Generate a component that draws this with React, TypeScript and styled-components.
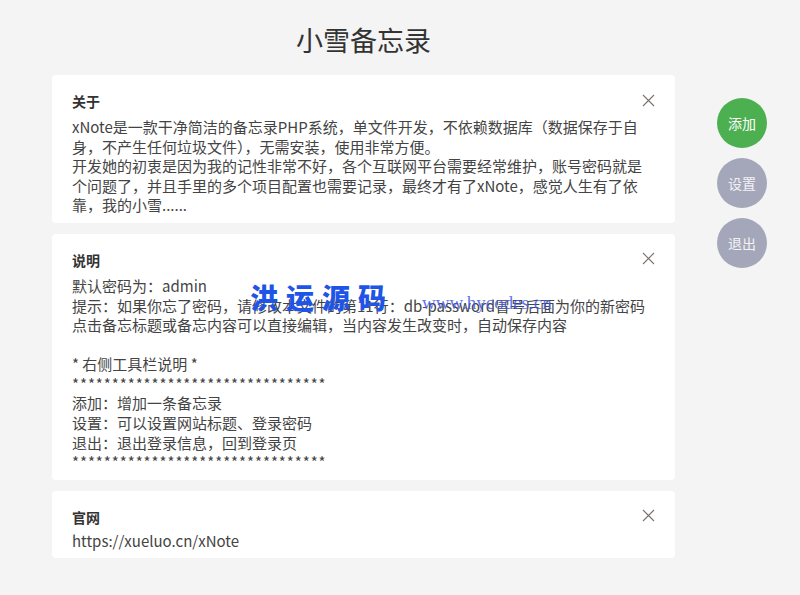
import React from "react";
import styled, { createGlobalStyle } from "styled-components";

const Global = createGlobalStyle`
  html, body { margin: 0; padding: 0; background: #f4f4f4; }
  body { font-family: "Noto Sans CJK SC", "Noto Sans", sans-serif; color: #333; }
  * { box-sizing: border-box; }
`;

const Page = styled.div`
  display: flex;
  align-items: flex-start;
  gap: 42px;
  padding-left: 52px;
  position: relative;
  min-height: 595px;
`;

const Main = styled.div`
  width: 623px;
  display: flex;
  flex-direction: column;
  gap: 11px;
`;

const Title = styled.h1`
  margin: 20px 0 4px;
  font-size: 27px;
  line-height: 40px;
  font-weight: 400;
  text-align: center;
  color: #333;
`;

const Card = styled.div`
  position: relative;
  background: #fff;
  border-radius: 4px;
  padding: 16px 20px 8px;
`;

const CardTitle = styled.div<{ $tight?: boolean }>`
  font-size: 14px;
  font-weight: 700;
  line-height: 20px;
  margin-bottom: ${(p) => (p.$tight ? "4px" : "6px")};
  color: #333;
`;

const CardBody = styled.div<{ $narrow?: boolean }>`
  font-size: 15px;
  line-height: 19.6px;
  color: #444;
  max-width: ${(p) => (p.$narrow ? "572px" : "none")};
`;

const Line = styled.div<{ $stars?: boolean }>`
  min-height: 19.5px;
  letter-spacing: ${(p) => (p.$stars ? "0.95px" : "normal")};
`;

const Close = styled.button`
  position: absolute;
  top: 18px;
  right: 20px;
  width: 14px;
  height: 14px;
  padding: 0;
  border: none;
  background: none;
  display: flex;
  align-items: center;
  justify-content: center;
  cursor: pointer;
`;

const Side = styled.div`
  padding-top: 98px;
  display: flex;
  flex-direction: column;
  gap: 10px;
`;

const Round = styled.button<{ $green?: boolean }>`
  width: 50px;
  height: 50px;
  border-radius: 50%;
  border: none;
  padding: 0;
  font-family: "Noto Sans CJK SC", sans-serif;
  font-size: 14px;
  color: ${(p) => (p.$green ? "#fff" : "#f2f2f6")};
  background: ${(p) => (p.$green ? "#4caf50" : "#a4a7b9")};
  cursor: pointer;
`;

const Watermark = styled.div`
  position: absolute;
  left: 250px;
  top: 277px;
  display: flex;
  align-items: baseline;
  gap: 28px;
  pointer-events: none;
`;

const WmCn = styled.span`
  display: inline-block;
  font-family: "Noto Sans CJK SC", sans-serif;
  font-weight: 900;
  font-size: 28px;
  letter-spacing: 8px;
  color: #1f55e6;
`;

const WmEn = styled.span`
  font-family: "Liberation Serif", serif;
  font-size: 19px;
  color: rgba(70, 90, 230, 0.85);
`;

const X = () => (
  <svg width="13" height="13" viewBox="0 0 13 13">
    <path d="M1 1L12 12M12 1L1 12" stroke="#7a726a" strokeWidth="1.1" fill="none" />
  </svg>
);

const stars = "*".repeat(32);

const notes = [
  {
    title: "关于",
    narrow: true,
    lines: [
      "xNote是一款干净简洁的备忘录PHP系统，单文件开发，不依赖数据库（数据保存于自身，不产生任何垃圾文件），无需安装，使用非常方便。",
      "开发她的初衷是因为我的记性非常不好，各个互联网平台需要经常维护，账号密码就是个问题了，并且手里的多个项目配置也需要记录，最终才有了xNote，感觉人生有了依靠，我的小雪......",
    ],
  },
  {
    title: "说明",
    lines: [
      "默认密码为：admin",
      "提示：如果你忘了密码，请修改本文件的第11行：db-password冒号后面为你的新密码",
      "点击备忘标题或备忘内容可以直接编辑，当内容发生改变时，自动保存内容",
      "",
      "* 右侧工具栏说明 *",
      stars,
      "添加：增加一条备忘录",
      "设置：可以设置网站标题、登录密码",
      "退出：退出登录信息，回到登录页",
      stars,
    ],
  },
  { title: "官网", lines: ["https://xueluo.cn/xNote"], tight: true },
];

export default function App() {
  return (
    <>
      <Global />
      <Page>
        <Main>
          <Title>小雪备忘录</Title>
          {notes.map((n) => (
            <Card key={n.title}>
              <CardTitle $tight={n.tight}>{n.title}</CardTitle>
              <CardBody $narrow={n.narrow}>
                {n.lines.map((l, i) => (
                  <Line key={i} $stars={l === stars}>
                    {l}
                  </Line>
                ))}
              </CardBody>
              <Close aria-label="关闭">
                <X />
              </Close>
            </Card>
          ))}
        </Main>
        <Side>
          <Round $green>添加</Round>
          <Round>设置</Round>
          <Round>退出</Round>
        </Side>
        <Watermark>
          <WmCn>洪运源码</WmCn>
          <WmEn>www.hycodes.cn</WmEn>
        </Watermark>
      </Page>
    </>
  );
}
